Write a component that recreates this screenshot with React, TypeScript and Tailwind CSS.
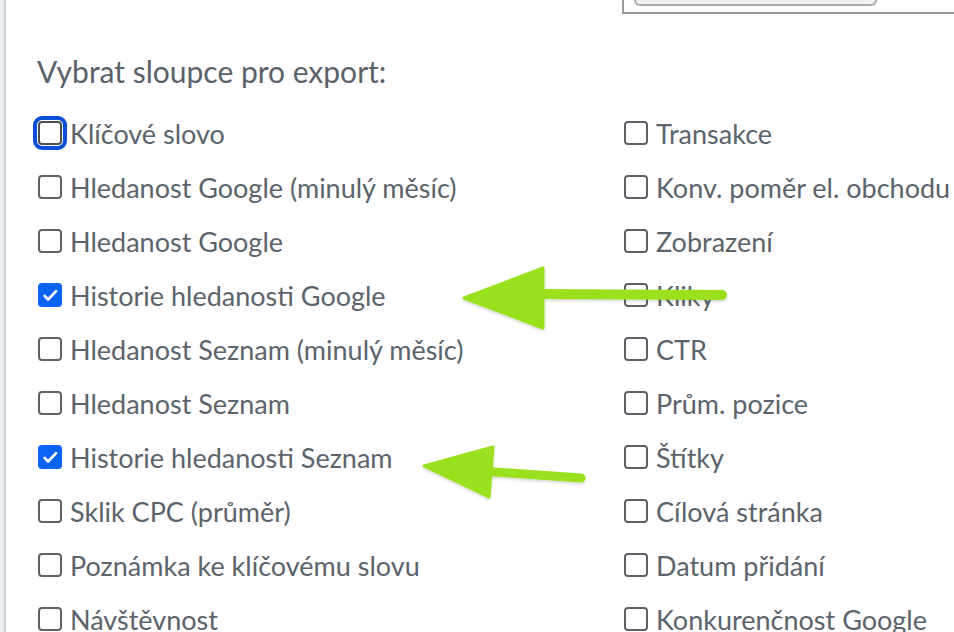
import React from "react";

const left = [
  { label: "Klíčové slovo", checked: false, focus: true },
  { label: "Hledanost Google (minulý měsíc)" },
  { label: "Hledanost Google" },
  { label: "Historie hledanosti Google", checked: true },
  { label: "Hledanost Seznam (minulý měsíc)" },
  { label: "Hledanost Seznam" },
  { label: "Historie hledanosti Seznam", checked: true },
  { label: "Sklik CPC (průměr)" },
  { label: "Poznámka ke klíčovému slovu" },
  { label: "Návštěvnost" },
];

const right = [
  "Transakce",
  "Konv. poměr el. obchodu",
  "Zobrazení",
  "Kliky",
  "CTR",
  "Prům. pozice",
  "Štítky",
  "Cílová stránka",
  "Datum přidání",
  "Konkurenčnost Google",
];

type BoxProps = { checked?: boolean; focus?: boolean };

function Box({ checked, focus }: BoxProps) {
  if (checked) {
    return (
      <span className="flex size-[24px] shrink-0 items-center justify-center rounded-[4px] bg-[#0b63f6]">
        <svg viewBox="0 0 24 24" className="size-[19px]" fill="none">
          <path d="M4.5 12.5l4.5 4.5 10-10.5" stroke="white" strokeWidth="3.4" strokeLinecap="round" strokeLinejoin="round" />
        </svg>
      </span>
    );
  }
  return (
    <span
      className={
        focus
          ? "size-[24px] shrink-0 rounded-[4px] border-2 border-[#4b4f54] bg-white outline-[4px] outline-solid outline-[#0a4fd6] outline-offset-[1px]"
          : "size-[24px] shrink-0 rounded-[4px] border-2 border-[#5f6368] bg-white"
      }
    />
  );
}

function Row({ label, checked, focus }: { label: string } & BoxProps) {
  return (
    <label className="flex h-[54px] items-center gap-[8px] whitespace-nowrap">
      <Box checked={checked} focus={focus} />
      <span>{label}</span>
    </label>
  );
}

function Arrow({ className, points, shaft, width }: { className: string; points: string; shaft: string; width: number }) {
  return (
    <svg className={className} viewBox="0 0 954 632" width="954" height="632">
      <defs>
        <filter id="sh" x="-10%" y="-10%" width="120%" height="130%">
          <feDropShadow dx="0" dy="1.5" stdDeviation="1.5" floodColor="#000" floodOpacity="0.18" />
        </filter>
      </defs>
      <g filter="url(#sh)" fill="#9be01b" stroke="#9be01b" strokeLinejoin="round" strokeLinecap="round">
        <path d={shaft} strokeWidth={width} fill="none" />
        <polygon points={points} strokeWidth="3" />
      </g>
    </svg>
  );
}

export default function App() {
  return (
    <div className="relative flex h-[632px] w-[954px] overflow-hidden bg-white font-['Lato','Noto_Sans',sans-serif] text-[#5b636b]">
      <div className="w-[6px] shrink-0 border-r-2 border-[#cfd3d7] bg-[#e9eef3]" />
      <div className="flex-1">
        <div className="ml-[616px] h-[14px] border-b-2 border-l-2 border-[#999]">
          <div className="ml-[10px] h-[6px] w-[243px] rounded-b-[6px] border-x-2 border-b-2 border-[#aaa] bg-[#f1f1f1]" />
        </div>
        <h2 className="ml-[31px] mt-[38px] h-[42px] text-[30px] leading-[38px] text-[#5a6169]">
          Vybrat sloupce pro export:
        </h2>
        <div className="ml-[32px] mt-[12px] grid grid-cols-[586px_1fr] text-[27px] leading-none">
          <div className="flex flex-col">
            {left.map((r) => (
              <Row key={r.label} label={r.label} checked={r.checked} focus={r.focus} />
            ))}
          </div>
          <div className="flex flex-col">
            {right.map((r) => (
              <Row key={r} label={r} />
            ))}
          </div>
        </div>
      </div>
      <Arrow
        className="pointer-events-none absolute left-0 top-0"
        shaft="M722 295 L530 294"
        width={10}
        points="464,298 543,268 543,328"
      />
      <Arrow
        className="pointer-events-none absolute left-0 top-0"
        shaft="M581 478 L480 471"
        width={9}
        points="424,466 493,447 489,497"
      />
    </div>
  );
}
